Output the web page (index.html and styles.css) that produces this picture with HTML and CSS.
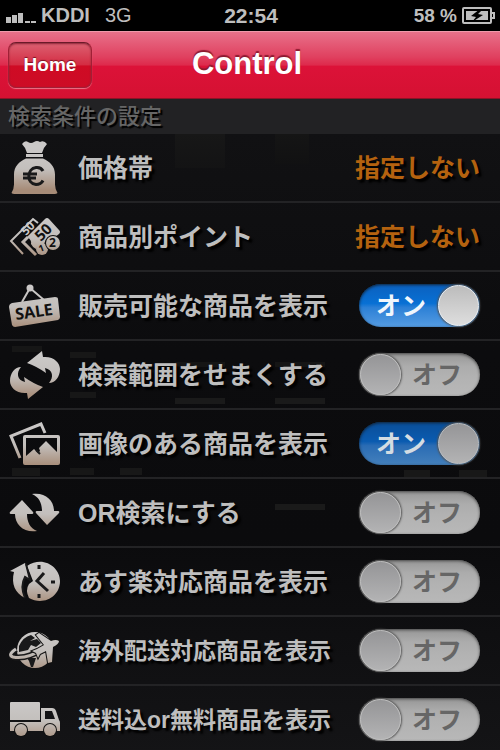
FILE: index.html
```html
<!DOCTYPE html>
<html lang="ja">
<head>
    <meta charset="UTF-8">
    <meta name="viewport" content="width=device-width, initial-scale=1.0">
    <title>Control</title>
    <link rel="stylesheet" href="styles.css">
</head>
<body>
    <div class="statusbar">
        <div class="carrier">
            <svg class="signal" width="30" height="12" viewBox="0 0 30 12" aria-hidden="true">
                <path d="M0 5h5v6H0zM6 3h5v8H6zM12 1h5v10h-5zM19 9h5v2h-5zM25 9h5v2h-5z"/>
            </svg>
            <strong>KDDI</strong>
            <span class="network">3G</span>
        </div>
        <strong class="clock">22:54</strong>
        <div class="power">
            <strong class="charge">58 %</strong>
            <svg width="34" height="18" viewBox="0 0 34 18" aria-hidden="true">
                <rect class="line" x="1" y="1" width="28" height="15" rx="1"/>
                <path class="line" d="M30 6h2v5h-2"/>
                <rect x="4" y="4" width="22" height="9"/>
                <path class="bolt" d="M18 2L9 9l5 1-4 5 11-7-5-1 5-5z"/>
            </svg>
        </div>
    </div>

    <header class="navbar">
        <button type="button" class="home">Home</button>
        <h1>Control</h1>
    </header>

    <main>
        <h2>検索条件の設定</h2>
        <ul class="settings">
            <li>
                <svg class="icon" viewBox="0 0 52 54" aria-hidden="true">
                    <defs>
                        <linearGradient id="metal" gradientUnits="userSpaceOnUse" x1="0" y1="8" x2="0" y2="50">
                            <stop offset="0" stop-color="#cbc9c8"/>
                            <stop offset="0.5" stop-color="#c3bfbc"/>
                            <stop offset="1" stop-color="#a78c78"/>
                        </linearGradient>
                    </defs>
                    <path d="M13 4q3-4 6-2 3 2 6 0 3-2 6 0 4-2 7 2-4 4-5 9H18q-1-5-5-9z"/>
                    <path d="M17 14h17v3H17zM17 18.500h17c7 3 12 8 12 16v10q0 4 2.500 8.500-1 1-3 1h-40q-2 0-3-1 2.500-4.500 2.500-8.500V34.500c0-8 5-13 12-16z"/>
                    <path class="cut" d="M34 31q-2-4-7-3.500c-9 1-10 16 0 17q5 0 7-4M14 34h14M14 38h13"/>
                </svg>
                <span class="name" id="price">価格帯</span>
                <button type="button" class="value" aria-describedby="price">指定しない</button>
            </li>
            <li>
                <svg class="icon" viewBox="0 0 52 54" aria-hidden="true">
                    <path class="outline thin" d="M14 45L2 32 24 10l5 4"/>
                    <text x="0" y="0" font-size="12" transform="translate(17 27) rotate(-45)">50</text>
                    <path class="outline" d="M27 46L14 33l5-5M14 33l8 8"/>
                    <path d="M18 28L36 10q2-2 4 0l10 11q2 2 0 4l-4 3q-8-2-11 7-6 0-8 5-3-1-5-5 1-4-4-7z"/>
                    <text class="ink" font-size="15" transform="translate(32 33) rotate(-45)">50</text>
                    <circle cx="33" cy="40" r="6"/>
                    <circle class="rim" cx="44" cy="34" r="7"/>
                    <text class="ink" font-size="9" transform="translate(31 43) rotate(-20)">1</text>
                    <text class="ink" font-size="12" x="40" y="38">2</text>
                </svg>
                <span class="name" id="point">商品別ポイント</span>
                <button type="button" class="value" aria-describedby="point">指定しない</button>
            </li>
            <li>
                <svg class="icon" viewBox="0 0 52 54" aria-hidden="true">
                    <path class="outline thin" d="M13 24l8-14 14 12"/>
                    <circle cx="21" cy="10" r="3.500"/>
                    <path d="M3 25l43-6q3 0 3 2l2 18q0 2-2 3L6 49q-2 0-3-2L0 29q0-3 3-4z"/>
                    <text class="ink" font-size="16" transform="translate(7 42) rotate(-8)">SALE</text>
                </svg>
                <label class="name" for="sale">販売可能な商品を表示</label>
                <span class="switch lit">
                    <input type="checkbox" id="sale" checked>
                    <span class="on">オン</span><span class="off">オフ</span>
                </span>
            </li>
            <li>
                <svg class="icon" viewBox="0 0 52 54" aria-hidden="true">
                    <path d="M18 16L33 4l1 6c11-1 17 6 17 12 0 8-5 14-11 14 5-6 4-13-4-15l1 5q-10-7-19-10z"/>
                    <path d="M34 40L19 52l-1-6C7 47 1 40 1 34c0-8 5-14 11-14-5 6-4 13 4 15l-1-5q10 7 19 10z"/>
                </svg>
                <label class="name" for="narrow">検索範囲をせまくする</label>
                <span class="switch">
                    <input type="checkbox" id="narrow">
                    <span class="on">オン</span><span class="off">オフ</span>
                </span>
            </li>
            <li>
                <svg class="icon" viewBox="0 0 52 54" aria-hidden="true">
                    <path class="outline" d="M36 17l-4-9L2 20l9 22"/>
                    <path fill-rule="evenodd" d="M16 19h33q2 0 2 2v26q0 2-2 2H16q-2 0-2-2V21q0-2 2-2zM17 22v18l8-7 4 4 2-2-1-3 7-7 11 11V22z"/>
                    <path class="cut fine" d="M27 34l4 4"/>
                </svg>
                <label class="name" for="image">画像のある商品を表示</label>
                <span class="switch">
                    <input type="checkbox" id="image" checked>
                    <span class="on">オン</span><span class="off">オフ</span>
                </span>
            </li>
            <li>
                <svg class="icon" viewBox="0 0 52 54" aria-hidden="true">
                    <path d="M13 15l11 12q1 2-1 2h-5c0 8 3 14 10 17-13 2-22-6-22-17H2q-2 0-1-2z"/>
                    <path d="M38 40L27 28q-1-2 1-2h5c0-8-3-14-10-17 13-2 22 6 22 17h4q2 0 1 2z"/>
                </svg>
                <label class="name" for="or">OR検索にする</label>
                <span class="switch">
                    <input type="checkbox" id="or">
                    <span class="on">オン</span><span class="off">オフ</span>
                </span>
            </li>
            <li>
                <svg class="icon" viewBox="0 0 52 54" aria-hidden="true">
                    <path d="M18 12c16-11 33 1 33 15 0 16-17 25-31 17q-4-8 0-14l4-3q-3-8-6-15z"/>
                    <path d="M1 17l15-8 5 17-5-3c-4 7-3 14 0 21C6 39 2 30 5 18z"/>
                    <path class="cut fine" d="M17 10l4 16-5-3c-4 7-3 14 0 21"/>
                    <path class="cut" d="M35 19l-7 8 11 10"/>
                    <path class="cut" d="M30 11v4M30 40v4M42 28h4"/>
                </svg>
                <label class="name" for="nextday">あす楽対応商品を表示</label>
                <span class="switch">
                    <input type="checkbox" id="nextday">
                    <span class="on">オン</span><span class="off">オフ</span>
                </span>
            </li>
            <li>
                <svg class="icon" viewBox="0 0 52 54" aria-hidden="true">
                    <circle cx="26" cy="27" r="18"/>
                    <path class="hole" d="M10 23q4-9 12-11l4 3-5 3 7-2 4 4-5 4-5-2-3 5-9 2zM18 35h9l-3 9h-2l-2-6z"/>
                    <path class="band" d="M7 26Q-2 32 4 34q13 3 32-9"/>
                    <path class="outline" d="M7 26Q-2 32 4 34q13 3 32-9"/>
                    <path class="plane" d="M50 18q0 3-6 6l-1 15-4 1-2-12-6 3-2 4-2-5-4-2 5-2 7-4-8-10 3-2 12 8q5-2 8 0z"/>
                </svg>
                <label class="name small" for="overseas">海外配送対応商品を表示</label>
                <span class="switch">
                    <input type="checkbox" id="overseas">
                    <span class="on">オン</span><span class="off">オフ</span>
                </span>
            </li>
            <li>
                <svg class="icon" viewBox="0 0 52 54" aria-hidden="true">
                    <path d="M2 10h28q1 0 1 1v17H1V11q0-1 1-1z"/>
                    <path fill-rule="evenodd" d="M1 30h31V16h11q3 0 4 3l3 9q1 1 1 3v8H1zM36 19v8h10l-3-8z"/>
                    <circle class="rim" cx="12" cy="38" r="6"/>
                    <circle class="rim" cx="41" cy="38" r="6"/>
                </svg>
                <label class="name small" for="shipping">送料込or無料商品を表示</label>
                <span class="switch">
                    <input type="checkbox" id="shipping">
                    <span class="on">オン</span><span class="off">オフ</span>
                </span>
            </li>
        </ul>
    </main>
</body>
</html>
```
FILE: styles.css
```css
body{
    margin: 0;
    background-color: #0e0e10;
    color: #bebebe;
    font-family: "Liberation Sans", "Noto Sans CJK JP", sans-serif;
}

h1, h2, ul{
    margin: 0;
    padding: 0;
}

button{
    border: none;
    background: none;
    font-family: inherit;
    cursor: pointer;
}

/* status bar */
.statusbar{
    display: grid;
    grid-template-columns: 1fr auto 1fr;
    align-items: center;
    height: 31px;
    padding: 0 4px 0 6px;
    background-color: #000;
    color: #bebebe;
    font-size: 20px;
}

.carrier, .power{
    display: flex;
    align-items: center;
    gap: 5px;
}

.power{
    justify-content: flex-end;
}

.clock{
    font-size: 21px;
}

.charge{
    font-size: 19px;
}

.statusbar svg{
    fill: #bebebe;
}

.statusbar .signal{
    margin-top: 4px;
}

.statusbar .line{
    fill: none;
    stroke: #bebebe;
    stroke-width: 2;
}

.statusbar .bolt{
    fill: #000;
}

.network{
    margin-left: 10px;
}

/* title bar */
.navbar{
    display: grid;
    grid-template-columns: 1fr auto 1fr;
    align-items: center;
    box-sizing: border-box;
    height: 68px;
    padding: 0 8px;
    border-top: 1px solid #f09aab;
    border-bottom: 1px solid #8c1226;
    background: linear-gradient(#e8718a, #e0405f 38%, #de2a4c 50%, #dc1238 52%, #d51132);
}

.home{
    justify-self: start;
    width: 84px;
    height: 46px;
    border: 1px solid #a02036;
    border-top-color: #6a1a28;
    border-radius: 8px;
    background: linear-gradient(#dc6172, #d42c42 50%, #cf0b24 52%, #cd0c26);
    box-shadow: 0 1px 1px #ee7488, inset 0 1px 2px #8a2436;
    color: #fff;
    font-size: 19px;
    font-weight: bold;
    text-shadow: 0 -1px 1px #7c1020;
}

h1{
    padding-bottom: 3px;
    margin-left: -6px;
    color: #fff;
    font-size: 31px;
    line-height: 40px;
    text-shadow: 0 -2px 1px #8c1a30;
}

h2{
    height: 35px;
    padding-left: 8px;
    background-color: #222224;
    color: #666;
    font-size: 22px;
    font-weight: 500;
    line-height: 36px;
    text-shadow: 2px 2px 1px #000;
}

/* settings list, with faint shelf shapes behind the rows */
.settings{
    list-style: none;
    background:
        linear-gradient(#171717, #131314) 175px 0 / 50px 34px no-repeat,
        linear-gradient(#151515, #111112) 275px 0 / 34px 30px no-repeat,
        linear-gradient(#161616, #161616) 12px 212px / 30px 6px no-repeat,
        linear-gradient(#171717, #171717) 70px 218px / 26px 6px no-repeat,
        linear-gradient(#151515, #151515) 175px 228px / 50px 5px no-repeat,
        linear-gradient(#151515, #151515) 275px 228px / 50px 5px no-repeat,
        linear-gradient(#1a1a1a, #1a1a1a) 175px 264px / 50px 6px no-repeat,
        linear-gradient(#1a1a1a, #1a1a1a) 275px 264px / 50px 6px no-repeat,
        linear-gradient(#171717, #171717) 70px 258px / 26px 6px no-repeat,
        linear-gradient(#171717, #171717) 12px 334px / 28px 8px no-repeat,
        linear-gradient(#171717, #171717) 70px 334px / 24px 7px no-repeat,
        linear-gradient(#181818, #181818) 120px 334px / 22px 7px no-repeat,
        linear-gradient(#181818, #181818) 404px 336px / 26px 7px no-repeat,
        linear-gradient(#181818, #181818) 459px 336px / 28px 7px no-repeat,
        linear-gradient(#1a1a1a, #1a1a1a) 275px 370px / 50px 6px no-repeat,
        linear-gradient(#111113, #0c0c0e 35%, #0b0b0d 65%, #141416);
}

.settings li{
    display: flex;
    align-items: center;
    box-sizing: border-box;
    height: 69px;
    padding: 0 20px 1px 9px;
    border-bottom: 2px solid #232325;
}

.icon{
    flex: none;
    width: 52px;
    height: 54px;
    margin-right: 17px;
    fill: url(#metal);
}

.icon .outline{
    fill: none;
    stroke: url(#metal);
    stroke-width: 3;
}

.icon .thin{
    stroke-width: 2;
}

.icon .cut{
    fill: none;
    stroke: #19191a;
    stroke-width: 3;
}

.icon .fine{
    stroke-width: 2;
}

.icon .band{
    fill: none;
    stroke: #19191a;
    stroke-width: 6;
}

.icon .hole{
    fill: #19191a;
}

.icon .rim, .icon .plane{
    stroke: #111;
    stroke-width: 2;
    paint-order: stroke;
}

.icon text{
    font-family: "Open Sans", sans-serif;
    font-weight: bold;
}

.icon .ink{
    fill: #111;
}

.name{
    flex: 1;
    padding-bottom: 3px;
    font-size: 25px;
    font-weight: bold;
    white-space: nowrap;
    text-shadow: 3px 3px 2px #000;
}

.name.small{
    font-size: 23px;
}

.value{
    padding: 0 0 3px;
    color: #b4620f;
    font-size: 25px;
    font-weight: bold;
    text-shadow: 3px 3px 2px #000;
}

/* on/off switch: the input is the track, its ::before is the knob */
.switch{
    display: grid;
    flex: none;
    align-items: center;
    width: 121px;
    color: #666;
    font-size: 25px;
    font-weight: bold;
}

.switch > *{
    grid-area: 1 / 1;
}

.switch span{
    padding-bottom: 3px;
    pointer-events: none;
}

.switch input{
    appearance: none;
    display: flex;
    box-sizing: border-box;
    width: 121px;
    height: 43px;
    margin: 0;
    padding: 1px;
    border-radius: 22px;
    background: linear-gradient(#969696, #acacac 30%, #b2b2b2 55%, #b8b8b8);
    box-shadow: inset 0 1px 3px #444;
}

.switch input::before{
    content: "";
    box-sizing: border-box;
    width: 41px;
    height: 41px;
    border: 1px solid #bebebe;
    border-radius: 50%;
    background: linear-gradient(#959597, #b3b3b4);
    box-shadow: 0 0 2px 1px #555;
}

.switch input:checked{
    justify-content: flex-end;
    background: linear-gradient(#0a4e98, #0a5bb0 45%, #2a6cb4 55%, #4480bc);
    box-shadow: inset 0 1px 3px #123;
}

.switch.lit input:checked{
    background: linear-gradient(#0b60be, #0870d4 45%, #2c80d6 55%, #559ce2);
}

.switch.lit input::before{
    border-color: #eee;
    background: linear-gradient(#bcbcbc, #dedede);
}

.switch .on{
    padding-left: 17px;
    color: #d4dce2;
}

.switch.lit .on{
    color: #f0f6fc;
}

.switch .off{
    padding-left: 53px;
}

.switch input:checked ~ .off, .switch input:not(:checked) ~ .on{
    display: none;
}
```
